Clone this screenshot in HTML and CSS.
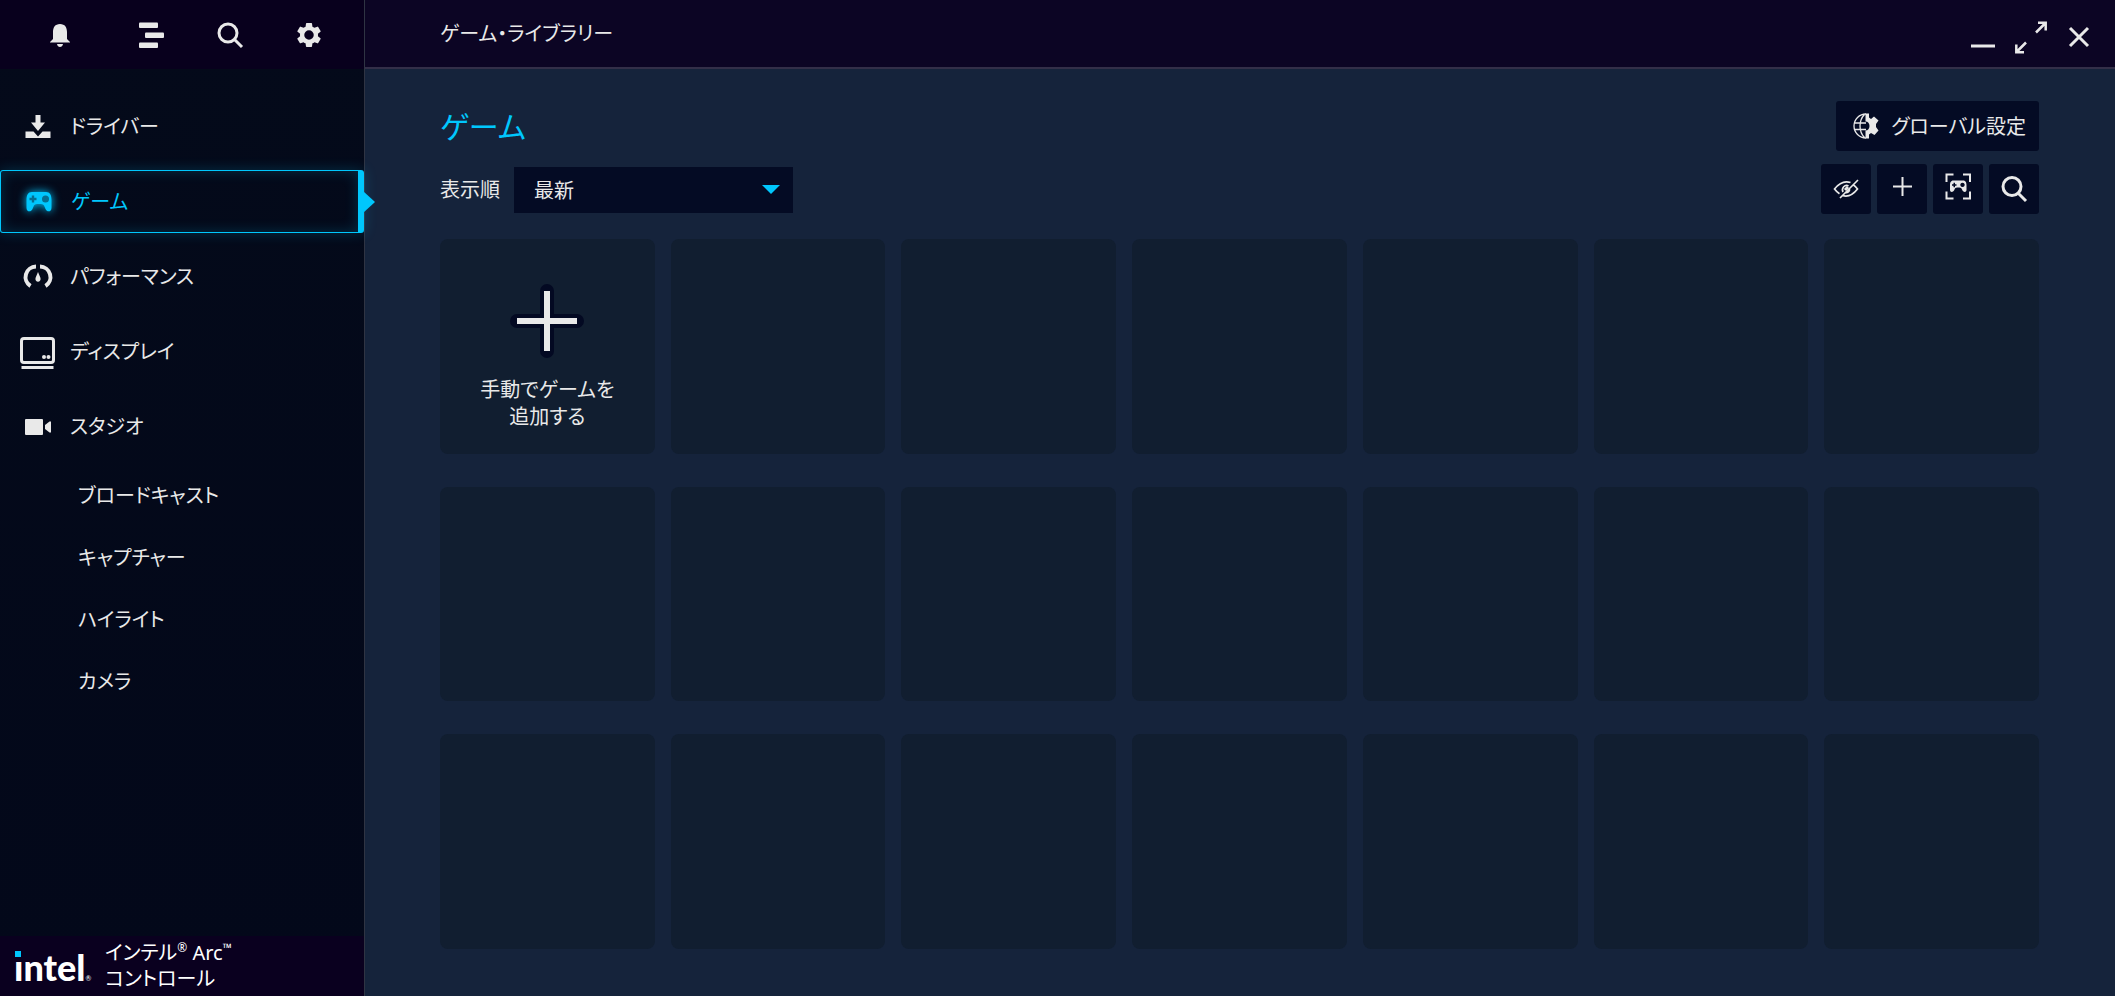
FILE: index.html
```html
<!DOCTYPE html>
<html lang="ja">
<head>
<meta charset="utf-8">
<meta name="viewport" content="width=device-width, initial-scale=1">
<title>ゲーム・ライブラリー</title>
<link rel="stylesheet" href="styles.css">
</head>
<body>
<div class="app">
  <aside class="sidebar">
    <div class="tools">
      <button class="tool wide" aria-label="通知"><svg width="30" height="30" viewBox="0 0 30 30" fill="currentColor"><path d="M15 4c5 0 7 3.600 7 8v7l3 3v.500H5V22l3-3v-7c0-4.400 2-8 7-8zM12 24h6c-.5 4-5.500 4-6 0z"/></svg></button>
      <button class="tool" aria-label="メニュー"><svg width="30" height="30" viewBox="0 0 30 30" fill="currentColor"><rect x="3" y="2.500" width="19" height="5.500" rx="1"/><rect x="9" y="12.500" width="19" height="5.500" rx="1"/><rect x="3" y="22.500" width="19" height="5.500" rx="1"/></svg></button>
      <button class="tool" aria-label="検索"><svg width="30" height="30" viewBox="0 0 30 30" fill="none" stroke="currentColor" stroke-width="3"><circle cx="13" cy="13" r="9"/><path d="M19.500 19.500l7.500 7.500"/></svg></button>
      <button class="tool" aria-label="設定"><svg width="30" height="30" viewBox="0 0 24 24" fill="currentColor"><path d="M19.140 12.940c.04-.3.06-.61.06-.94s-.02-.64-.07-.94l2.030-1.580a.49.49 0 0 0 .12-.61l-1.920-3.320a.488.488 0 0 0-.59-.22l-2.390.96c-.5-.38-1.030-.7-1.620-.94l-.36-2.540a.484.484 0 0 0-.48-.41h-3.840c-.24 0-.43.17-.47.41l-.36 2.540c-.59.24-1.130.57-1.620.94l-2.390-.96a.488.488 0 0 0-.59.22L2.740 8.870c-.12.210-.08.470.12.610l2.030 1.580c-.05.3-.09.630-.09.940s.02.640.07.940l-2.030 1.580a.49.49 0 0 0-.12.610l1.920 3.320c.12.220.37.290.59.220l2.390-.96c.5.380 1.030.7 1.620.94l.36 2.540c.05.240.24.410.48.410h3.840c.24 0 .44-.17.47-.41l.36-2.540c.59-.24 1.130-.56 1.620-.94l2.390.96c.22.080.47 0 .59-.22l1.920-3.320a.49.49 0 0 0-.12-.61zM12 15.800a3.800 3.800 0 1 1 0-7.600 3.800 3.800 0 0 1 0 7.600z"/></svg></button>
    </div>
    <nav class="nav">
      <a class="item" href="#"><svg width="36" height="36" viewBox="0 0 36 36" fill="currentColor"><path d="M15.500 6h5v7.500h4.500l-7 8.500-7-8.500h4.500zM5.500 22.500h8l4.500 5 4.500-5h8v6.500h-25z"/></svg>ドライバー</a>
      <a class="item active" href="#"><svg width="36" height="36" viewBox="0 0 36 36" fill="currentColor"><path d="M12 8h14c4 0 5.500 3 5.500 8v8c0 4-4.500 4.500-6 1l-1.500-3.500c-1-1.500-2-1.500-5-1.500s-4 0-5 1.500L12.500 25c-1.500 3.500-6 3-6-1v-8c0-5 1.500-8 5.500-8z"/><path class="hole" d="M11.800 11.500h2.400v2.300h2.300v2.400h-2.300v2.300h-2.400v-2.300H9.500v-2.400h2.300z"/><circle class="hole" cx="25.500" cy="15" r="3.500"/></svg>ゲーム</a>
      <a class="item" href="#"><svg width="36" height="36" viewBox="0 0 36 36" fill="none" stroke="currentColor" stroke-width="4"><path d="M10.500 27A10.500 10.500 0 0 1 16 7.600M20 7.600A10.500 10.500 0 0 1 25.500 27"/><path fill="currentColor" stroke="none" d="M18 13l2.500 6c1 5-6 5-5 0z"/></svg>パフォーマンス</a>
      <a class="item" href="#"><svg width="36" height="36" viewBox="0 0 36 36" fill="none" stroke="currentColor"><rect x="1.500" y="4.500" width="32" height="24" rx="2.500" stroke-width="3"/><path stroke-width="3" d="M1.500 33.500h32"/><g fill="currentColor" stroke="none"><circle cx="24" cy="23" r="2"/><circle cx="28.500" cy="23" r="2"/></g></svg>ディスプレイ</a>
      <a class="item" href="#"><svg width="36" height="36" viewBox="0 0 36 36" fill="currentColor"><rect x="5" y="10" width="18" height="16" rx="1"/><path d="M25 16l4.500-3.500H31v11h-1.500L25 20z"/></svg>スタジオ</a>
      <div class="subs">
        <a class="sub" href="#">ブロードキャスト</a>
        <a class="sub" href="#">キャプチャー</a>
        <a class="sub" href="#">ハイライト</a>
        <a class="sub" href="#">カメラ</a>
      </div>
    </nav>
    <footer class="brand">
      <div class="logo">ıntel<i class="dot"></i><small>®</small></div>
      <div class="product">インテル<sup>®</sup> Arc<sup>™</sup><br>コントロール</div>
    </footer>
  </aside>
  <div class="content">
    <header class="titlebar">
      <h1>ゲーム・ライブラリー</h1>
      <div class="window">
        <button class="winbtn" aria-label="最小化"><svg width="32" height="32" viewBox="0 0 32 32" stroke="currentColor" stroke-width="3"><path d="M4 25h24"/></svg></button>
        <button class="winbtn" aria-label="最大化"><svg width="32" height="32" viewBox="0 0 32 32" fill="none" stroke="currentColor" stroke-width="2.500"><path d="M21 11.500l9-9M23 1.800h7.700V9.500M11 21.500l-9 9M1.300 23.500v7.700H9"/></svg></button>
        <button class="winbtn" aria-label="閉じる"><svg width="32" height="32" viewBox="0 0 32 32" fill="none" stroke="currentColor" stroke-width="3"><path d="M7 7l18 18M25 7L7 25"/></svg></button>
      </div>
    </header>
    <main class="main">
      <div class="head">
        <h2>ゲーム</h2>
        <button class="global"><svg width="26" height="26" viewBox="0 0 26 26" fill="none" stroke="currentColor" stroke-width="1.300"><path d="M13 1a12 12 0 0 0 0 24M11.500 1.500c-6 6-6 17 0 23M1 10h12M1 16.500h12M8 13"/><path fill="currentColor" stroke="none" d="M12.500.5h3.500v4l2 1.500 3-2.500 4.500 4-2.500 3.500v3l2.500 3.500-4 4.500-3.500-2-2 1.500v4h-3.500v-8c2.500 0 4-2 4-4.500s-1.500-4.500-4-4.500z"/></svg>グローバル設定</button>
      </div>
      <div class="controls">
        <label for="sort">表示順</label>
        <div class="select"><select id="sort"><option>最新</option></select></div>
        <div class="actions">
          <button class="act" aria-label="非表示のゲーム"><svg width="26" height="26" viewBox="0 0 26 26" fill="none" stroke="currentColor" stroke-width="1.700"><path d="M17.500 6.500C10 4 5 8.500 1.500 13c1.200 1.600 2.800 3.300 5 4.700M9.500 19.500c6.500 2 11.500-2 15-6.500-1.200-1.600-2.400-3-4-4M10 16c-2-4 2-8 5.500-6M16.500 12.500c.5 3-2 4.500-4.500 4M25 4L7 22"/><path d="M12 14l3-3" stroke-width="3"/></svg></button>
          <button class="act" aria-label="追加"><svg width="26" height="26" viewBox="0 0 26 26" stroke="currentColor" stroke-width="2"><path d="M13.500 1v19M4 10.500h19"/></svg></button>
          <button class="act" aria-label="ゲームをスキャン"><svg width="26" height="26" viewBox="0 0 26 26"><path fill="none" stroke="currentColor" stroke-width="2" d="M1.500 6V-1.500h7M18 -1.500h7V6M25 15.500v7h-7M8.500 22.500h-7v-7"/><path fill="currentColor" fill-rule="evenodd" d="M8.500 4.500h9.500c3 0 3.500 2.500 3.500 5v4.500c0 2.500-3 2.500-4 .5l-1-2c-.5-1-1.500-1-3.300-1s-2.700 0-3.200 1l-1 2c-1 2-4 2-4-.5V9.500c0-2.500.5-5 3.500-5zM8.500 6.700v1.500H7v1.500h1.500v1.500H10V9.700h1.500V8.200H10V6.700zM17.500 6.700a2.200 2.200 0 1 0 .01 0z"/></svg></button>
          <button class="act" aria-label="検索"><svg width="26" height="26" viewBox="0 0 26 26" fill="none" stroke="currentColor" stroke-width="3"><circle cx="11" cy="10.500" r="9"/><path d="M17 17l8 8"/></svg></button>
        </div>
      </div>
      <div class="grid">
        <button class="card add"><svg width="70" height="70" viewBox="0 0 70 70"><path class="halo" d="M35 5v60M5 35h60"/><path class="plus" d="M35 5v60M5 35h60"/></svg><span>手動でゲームを<br>追加する</span></button>
        <div class="card"></div><div class="card"></div><div class="card"></div><div class="card"></div><div class="card"></div><div class="card"></div>
        <div class="card"></div><div class="card"></div><div class="card"></div><div class="card"></div><div class="card"></div><div class="card"></div><div class="card"></div>
        <div class="card"></div><div class="card"></div><div class="card"></div><div class="card"></div><div class="card"></div><div class="card"></div><div class="card"></div>
      </div>
    </main>
  </div>
</div>
</body>
</html>
```
FILE: styles.css
```css
* { box-sizing: border-box; }
body {
  margin: 0;
  background: #15233b;
  color: #e9e9e9;
  font: 20px/27px "Noto Sans", "Noto Sans CJK JP", sans-serif;
  font-feature-settings: "palt";
}
button, select { font: inherit; font-feature-settings: inherit; color: inherit; border: 0; padding: 0; background: none; }
a { color: inherit; text-decoration: none; }
h1, h2 { margin: 0; font-weight: 400; }
svg { display: block; flex: none; overflow: visible; }
.app { display: flex; min-height: 100vh; }
.sidebar { width: 365px; flex: none; display: flex; flex-direction: column; background: linear-gradient(#040a1a, #03081a); border-right: 1px solid #2f3443; }
.tools { height: 69px; background: #08001d; display: flex; align-items: center; padding-left: 45px; gap: 49px; }
.wide { width: 42px; }
.nav { flex: 1; padding-top: 26px; }
.item { position: relative; display: flex; align-items: center; gap: 14px; height: 63px; margin-bottom: 12px; padding-left: 20px; }
.active { color: #00c7fd; border: 1px solid; border-right-width: 6px; border-radius: 3px; gap: 15px; padding-left: 19px; box-shadow: 0 0 14px #00c7fd33, inset 0 0 14px #00c7fd33; }
.active svg { filter: drop-shadow(0 0 5px #00c7fd); }
.active::after { content: ""; position: absolute; left: 100%; top: 20px; margin-left: 5px; border: 11px solid transparent; border-left: 12px solid #00c7fd; border-right: 0; }
.hole { fill: #056f91; }
.subs { margin-top: -6px; }
.sub { display: flex; align-items: center; height: 62px; padding-left: 78px; }
.brand { height: 60px; background: #0a001f; display: flex; align-items: center; gap: 15px; padding-left: 14px; color: #fff; }
.logo { position: relative; width: 76px; margin-top: 12px; font: 900 36px/40px Lato, sans-serif; white-space: nowrap; }
.dot { position: absolute; left: 1px; top: 4px; width: 6px; height: 6px; background: #00c7fd; }
.logo small { font-size: 7px; font-weight: 400; }
.product { line-height: 26px; }
sup { font-size: 12px; line-height: 0; }
.content { flex: 1; min-width: 0; display: flex; flex-direction: column; }
.titlebar { height: 69px; background: #0c0524; border-bottom: 2px solid #332f48; display: flex; align-items: center; justify-content: space-between; padding: 0 20px 0 75px; }
.titlebar h1 { font-size: 20px; }
.window { display: flex; gap: 16px; margin-top: 6px; }
.main { padding: 32px 76px 47px 75px; }
.head, .controls { display: flex; align-items: center; }
.head { justify-content: space-between; height: 50px; margin-bottom: 13px; }
.head h2 { color: #00c7fd; font-size: 30px; }
.global { height: 50px; display: flex; align-items: center; gap: 12px; padding: 0 13px 0 17px; background: #040b24; border-radius: 3px; }
.controls { height: 50px; margin-bottom: 25px; }
.select { position: relative; margin: 2px 0 0 14px; }
.select select { appearance: none; display: block; width: 279px; height: 46px; padding-left: 20px; background: #040b24; }
.select::after { content: ""; position: absolute; right: 13px; top: 18px; border: 9px solid transparent; border-top-color: #00c7fd; border-bottom: 0; }
.actions { display: flex; gap: 6px; margin-left: auto; }
.act { width: 50px; height: 50px; display: grid; place-items: center; background: #040b24; border-radius: 3px; }
.grid { display: grid; grid-template-columns: repeat(7, 1fr); gap: 33px 16px; }
.card { aspect-ratio: 1; background: #111e30; border-radius: 8px; }
.add { display: flex; flex-direction: column; align-items: center; justify-content: center; gap: 20px; padding-top: 24px; }
.halo { stroke: #030922; stroke-width: 14px; stroke-linecap: round; }
.plus { stroke: #e9e9e9; stroke-width: 6px; }
```
